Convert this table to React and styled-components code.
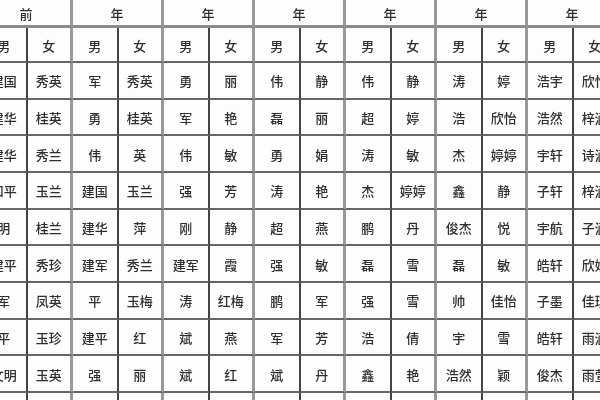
import React from "react";
import styled, { createGlobalStyle } from "styled-components";

const Global = createGlobalStyle`
  html, body { margin: 0; padding: 0; background: #fff; }
  body { width: 600px; height: 400px; overflow: hidden; }
`;

const Frame = styled.div`
  width: 600px;
  height: 400px;
  overflow: hidden;
  background: #fdfdfd;
`;

const Grid = styled.div`
  display: grid;
  grid-template-columns: repeat(14, 45.5px);
  grid-template-rows: 28px 35px repeat(10, 36.67px);
  margin-left: -18px;
  width: 637px;
  font-family: "Noto Sans CJK SC", "Noto Sans", sans-serif;
  color: #2e2e2e;
  filter: blur(0.7px);
`;

const Cell = styled.div`
  box-sizing: border-box;
  display: flex;
  align-items: center;
  justify-content: center;
  font-size: 13px;
  font-weight: 500;
  white-space: nowrap;
  border-bottom: ${(p) => (p.$head ? "3px solid #8a8a8a" : "2.5px solid #666")};
  border-right: ${(p) => (p.$pairEnd ? "3px solid #999" : "2px solid #444")};
  grid-column: ${(p) => (p.$span ? "span 2" : "auto")};
  padding-top: ${(p) => (p.$head ? "2px" : "1px")};
`;

const headers = ["前", "年", "年", "年", "年", "年", "年"];

const rows = [
  ["建国", "秀英", "军", "秀英", "勇", "丽", "伟", "静", "伟", "静", "涛", "婷", "浩宇", "欣怡"],
  ["建华", "桂英", "勇", "桂英", "军", "艳", "磊", "丽", "超", "婷", "浩", "欣怡", "浩然", "梓涵"],
  ["建华", "秀兰", "伟", "英", "伟", "敏", "勇", "娟", "涛", "敏", "杰", "婷婷", "宇轩", "诗涵"],
  ["和平", "玉兰", "建国", "玉兰", "强", "芳", "涛", "艳", "杰", "婷婷", "鑫", "静", "子轩", "梓涵"],
  ["明", "桂兰", "建华", "萍", "刚", "静", "超", "燕", "鹏", "丹", "俊杰", "悦", "宇航", "子涵"],
  ["建平", "秀珍", "建军", "秀兰", "建军", "霞", "强", "敏", "磊", "雪", "磊", "敏", "皓轩", "欣妍"],
  ["军", "凤英", "平", "玉梅", "涛", "红梅", "鹏", "军", "强", "雪", "帅", "佳怡", "子墨", "佳琪"],
  ["平", "玉珍", "建平", "红", "斌", "燕", "军", "芳", "浩", "倩", "宇", "雪", "皓轩", "雨涵"],
  ["文明", "玉英", "强", "丽", "斌", "红", "斌", "丹", "鑫", "艳", "浩然", "颖", "俊杰", "雨萱"],
  ["", "", "", "", "", "", "", "", "", "", "", "", "", ""],
];

export default function App() {
  return (
    <Frame>
      <Global />
      <Grid>
        {headers.map((h, i) => (
          <Cell key={"h" + i} $span $head $pairEnd>
            {h}
          </Cell>
        ))}
        {Array.from({ length: 14 }).map((_, i) => (
          <Cell key={"s" + i} $pairEnd={i % 2 === 1}>
            {i % 2 === 0 ? "男" : "女"}
          </Cell>
        ))}
        {rows.map((r, ri) =>
          r.map((t, ci) => (
            <Cell key={ri + "-" + ci} $pairEnd={ci % 2 === 1}>
              {t}
            </Cell>
          ))
        )}
      </Grid>
    </Frame>
  );
}
